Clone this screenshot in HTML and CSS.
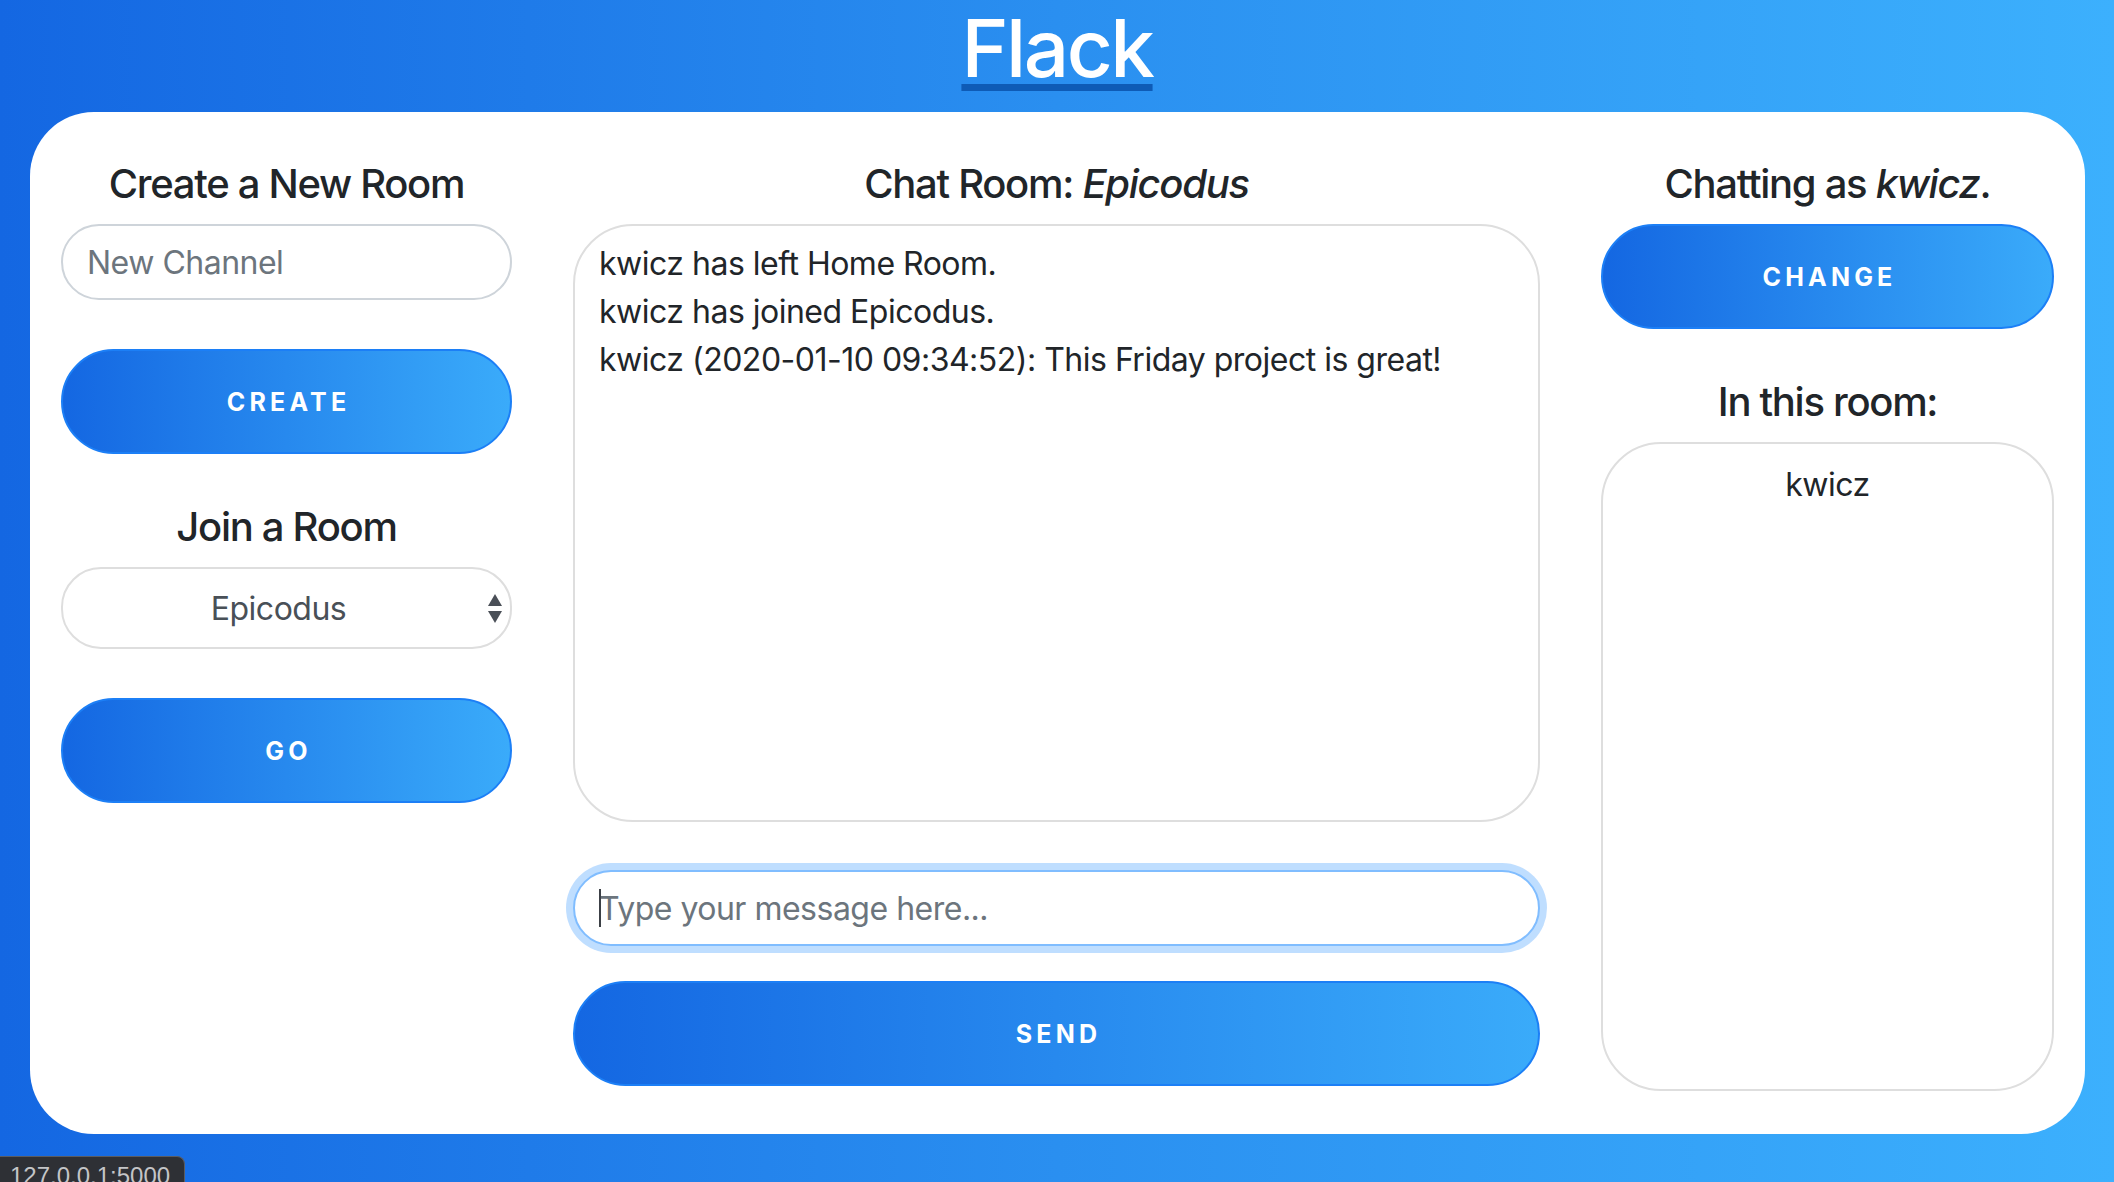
FILE: index.html
```html
<!DOCTYPE html>
<html lang="en">
<head>
<meta charset="utf-8">
<title>Flack</title>
<link rel="stylesheet" href="styles.css">
</head>
<body>
<header class="site-header">
  <h1 class="brand"><a href="#" class="brand-link">Flack</a></h1>
</header>
<main class="card">
  <section class="col">
    <h5 class="col-title">Create a New Room</h5>
    <input class="field field-gap" type="text" placeholder="New Channel">
    <button class="btn btn-gap">Create</button>
    <h5 class="col-title">Join a Room</h5>
    <div class="select-wrap">
      <select class="field select"><option>Epicodus</option></select>
      <svg class="select-arrows" width="16" height="30" viewBox="0 0 16 30" aria-hidden="true">
        <path d="M8 0 L15 12 L1 12 Z" fill="#4a4f57"/>
        <path d="M1 17 L15 17 L8 29 Z" fill="#4a4f57"/>
      </svg>
    </div>
    <button class="btn">Go</button>
  </section>
  <section class="col">
    <h5 class="col-title">Chat Room: <em>Epicodus</em></h5>
    <div class="messages">
      <div class="msg">kwicz has left Home Room.</div>
      <div class="msg">kwicz has joined Epicodus.</div>
      <div class="msg">kwicz (2020-01-10 09:34:52): This Friday project is great!</div>
    </div>
    <div class="input-wrap">
      <input class="field field-focus" type="text" placeholder="Type your message here...">
      <span class="caret"></span>
    </div>
    <button class="btn">Send</button>
  </section>
  <section class="col">
    <h5 class="col-title">Chatting as <em>kwicz</em>.</h5>
    <button class="btn btn-gap">Change</button>
    <h5 class="col-title">In this room:</h5>
    <div class="users">
      <div class="user">kwicz</div>
    </div>
  </section>
</main>
<div class="status-bar">127.0.0.1:5000</div>
</body>
</html>
```
FILE: styles.css
```css
html, body {
  margin: 0;
  padding: 0;
}
body {
  min-height: 100vh;
  background: linear-gradient(to right, #1467e2 0%, #2a8ff0 50%, #3cb0fd 100%);
  font-family: Inter, "Noto Sans", "Liberation Sans", sans-serif;
  color: #212529;
  font-size: 32px;
  line-height: 48px;
  letter-spacing: -0.5px;
}
.site-header {
  text-align: center;
}
.brand {
  margin: 0 0 16px;
  font-size: 80px;
  line-height: 96px;
  font-weight: 500;
  letter-spacing: -2.5px;
}
.brand-link {
  color: #fff;
  text-decoration: underline;
  text-decoration-color: #0e5bb6;
  text-decoration-thickness: 7px;
  text-underline-offset: 7px;
}
.card {
  margin: 0 29px 0 30px;
  background: #fff;
  border-radius: 64px;
  padding: 48px 31px 48px;
  display: grid;
  grid-template-columns: 451px 967px 453px;
  column-gap: 61px;
}
.col {
  display: flex;
  flex-direction: column;
  min-width: 0;
}
.col-title {
  margin: 0 0 16px;
  font-size: 40px;
  line-height: 48px;
  font-weight: 500;
  letter-spacing: -1.3px;
  text-align: center;
  color: #212529;
}
.col-title em {
  font-style: italic;
}
.field {
  display: block;
  box-sizing: border-box;
  width: 100%;
  height: 76px;
  border: 2px solid #ced4da;
  border-radius: 40px;
  padding: 0 24px;
  font-family: inherit;
  font-size: 32px;
  letter-spacing: -0.5px;
  color: #495057;
  background: #fff;
  outline: none;
}
.field::placeholder {
  color: #6c757d;
}
.field-gap {
  margin-bottom: 49px;
}
.input-wrap {
  position: relative;
  margin-bottom: 35px;
}
.field-focus {
  border-color: #80bdff;
  box-shadow: 0 0 0 7px rgba(0, 123, 255, 0.25);
}
.caret {
  position: absolute;
  left: 26px;
  top: 19px;
  width: 2px;
  height: 38px;
  background: #3c4046;
}
.select-wrap {
  position: relative;
  margin-bottom: 49px;
}
.select {
  height: 82px;
  border-color: #dedede;
  -webkit-appearance: none;
  appearance: none;
  padding: 0 40px 0 24px;
  text-align: center;
  text-align-last: center;
}
.select-arrows {
  position: absolute;
  right: 9px;
  top: 27px;
}
.btn {
  display: block;
  box-sizing: border-box;
  width: 100%;
  height: 105px;
  border: 2px solid #1c7ff6;
  border-radius: 53px;
  background: linear-gradient(to right, #1467e2, #3aabfa);
  color: #fff;
  font-family: inherit;
  font-size: 25px;
  font-weight: 700;
  letter-spacing: 4.2px;
  text-indent: 4px;
  text-transform: uppercase;
  cursor: pointer;
  padding: 0;
}
.btn-gap {
  margin-bottom: 49px;
}
.messages {
  box-sizing: border-box;
  height: 598px;
  border: 2px solid #dedede;
  border-radius: 60px;
  padding: 14px 24px 12px;
  margin-bottom: 48px;
  color: #212529;
}
.users {
  flex: 1;
  box-sizing: border-box;
  border: 2px solid #dedede;
  border-radius: 60px;
  padding: 17px 16px;
  margin-bottom: -5px;
  text-align: center;
  color: #212529;
}
.status-bar {
  position: fixed;
  left: 0;
  bottom: -14px;
  height: 40px;
  box-sizing: border-box;
  padding: 0 14px 0 10px;
  background: #2e3035;
  border: 1px solid #5a5c61;
  border-left: none;
  border-top-right-radius: 8px;
  color: #c4c5c7;
  font-family: "Liberation Sans", Arial, sans-serif;
  font-size: 24px;
  line-height: 38px;
  letter-spacing: 0;
}
```
